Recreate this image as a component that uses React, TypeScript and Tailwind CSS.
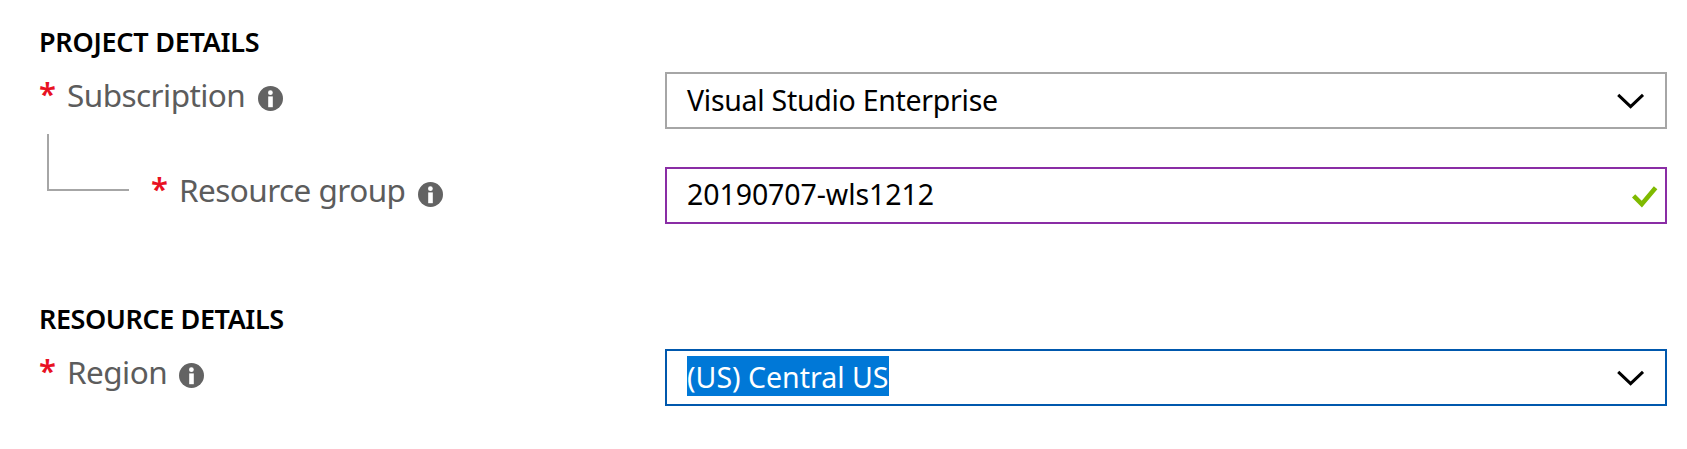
import type { ReactNode } from "react";

function InfoIcon() {
  return (
    <svg viewBox="0 0 25 25" className="h-[25px] w-[25px] shrink-0" aria-hidden="true">
      <circle cx="12.5" cy="12.5" r="12.5" fill="#636363" />
      <circle cx="12.4" cy="6.7" r="2.4" fill="#fff" />
      <rect x="10.2" y="10.4" width="4.6" height="10.8" fill="#fff" />
    </svg>
  );
}

function Chevron() {
  return (
    <svg viewBox="0 0 28 18" className="mr-[20px] mt-px h-[18px] w-[28px]" fill="none" aria-hidden="true">
      <path d="M1.2 2.8 L13.6 14.7 L26 2.8" stroke="#000" strokeWidth="3" />
    </svg>
  );
}

function Check() {
  return (
    <svg viewBox="0 0 26 22" className="mr-[7px] mt-[2px] h-[22px] w-[26px]" fill="none" aria-hidden="true">
      <path d="M1.6 9.9 L9.8 18.2 L23.6 1.8" stroke="#7fba00" strokeWidth="4.6" />
    </svg>
  );
}

function Label({ children, className }: { children: ReactNode; className: string }) {
  return (
    <div className={`flex h-10 items-start text-[31.5px] leading-10 text-[#5c5c5c] ${className}`}>
      <span className="-ml-px w-[28px] shrink-0 text-[31px] font-semibold leading-[36px] text-[#e81123]">*</span>
      {children}
    </div>
  );
}

export default function App() {
  return (
    <main className="h-[449px] w-[1687px] overflow-hidden bg-white pl-10 pt-[21px] font-['Noto_Sans',sans-serif] text-black">
      <section>
        <h2 className="-ml-px h-[51px] pt-px text-[27px] font-semibold leading-10 tracking-[-0.26px]">
          <span>PROJECT DETAILS</span>
        </h2>
        <div className="grid h-[95px] grid-cols-[625px_1002px]">
          <Label className="pt-[3px]">
            <span className="w-[191px] tracking-[-0.55px]">Subscription</span>
            <span className="pt-[11px]"><InfoIcon /></span>
          </Label>
          <div className="flex h-[57px] items-center justify-between border-2 border-[#a6a6a6] pl-5">
            <span className="pb-[2px] text-[28.5px] leading-10 tracking-[-0.28px]">Visual Studio Enterprise</span>
            <Chevron />
          </div>
        </div>
        <div className="grid h-[131px] grid-cols-[625px_1002px]">
          <div className="flex">
            <div className="-mt-[33px] ml-[7px] mr-[23px] h-[57px] w-[82px] border-b-2 border-l-2 border-[#a6a6a6]" />
            <Label className="pt-[3px]">
              <span className="w-[239px] tracking-[-0.55px]">Resource group</span>
              <span className="pt-[12px]"><InfoIcon /></span>
            </Label>
          </div>
          <div className="flex h-[57px] items-center justify-between border-2 border-[#8a2da5] pl-5">
            <span className="pb-[4px] text-[28.5px] leading-10 tracking-[-0.08px]">20190707-wls1212</span>
            <Check />
          </div>
        </div>
      </section>
      <section>
        <h2 className="-ml-px h-[51px] pt-px text-[27px] font-semibold leading-10 tracking-[-0.42px]">
          <span>RESOURCE DETAILS</span>
        </h2>
        <div className="grid grid-cols-[625px_1002px]">
          <Label className="pt-[3px]">
            <span className="w-[112px] tracking-[-0.55px]">Region</span>
            <span className="pt-[11px]"><InfoIcon /></span>
          </Label>
          <div className="flex h-[57px] items-center justify-between border-2 border-[#0058ad] pl-5">
            <span className="mb-[3px] h-10 w-[202px] whitespace-nowrap bg-[#0078d7] text-[28.5px] leading-[42px] text-white">(US) Central US</span>
            <Chevron />
          </div>
        </div>
      </section>
    </main>
  );
}
